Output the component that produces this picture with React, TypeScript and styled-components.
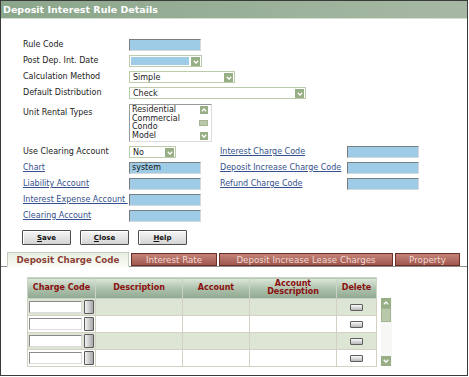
import React from 'react';
import styled, { createGlobalStyle } from 'styled-components';

const GlobalStyle = createGlobalStyle`
  html, body { margin: 0; padding: 0; background: #fff; }
  body { font-family: "DejaVu Sans", Verdana, sans-serif; font-size: 8px; color: #222; }
  * { box-sizing: border-box; }
`;

const Frame = styled.div`
  width: 468px;
  height: 376px;
  border: 1px solid #3a3a3a;
  background: #fff;
  overflow: hidden;
`;

const TitleBar = styled.div`
  height: 18px;
  padding-left: 2px;
  display: flex;
  align-items: center;
  background: linear-gradient(to right, #8aa68b, #a7b9a4);
  border-bottom: 1px solid #d6dfd0;
  color: #fff;
  font-size: 9.5px;
  font-weight: bold;
`;

const Form = styled.div`
  padding: 20px 0 0 22px;
  display: grid;
  grid-template-columns: 106px 91px 127px 72px;
  row-gap: 4px;
  align-items: center;
`;

const Label = styled.div<{ $top?: boolean }>`
  white-space: nowrap;
  line-height: 12px;
  align-self: ${(p) => (p.$top ? 'start' : 'center')};
  margin-top: ${(p) => (p.$top ? '4px' : '0')};
`;

const LinkLabel = styled.a`
  color: #34508c;
  text-decoration: underline;
  white-space: nowrap;
  line-height: 12px;
  cursor: pointer;
`;

const Field = styled.div<{ $span?: number }>`
  grid-column: span ${(p) => p.$span ?? 1};
  display: flex;
`;

const TextBox = styled.div<{ $width?: number }>`
  width: ${(p) => p.$width ?? 72}px;
  height: 12px;
  background: #9ecbe6;
  border-top: 1px solid #7d7d7d;
  border-left: 1px solid #7d7d7d;
  border-bottom: 1px solid #d9d9d9;
  border-right: 1px solid #d9d9d9;
  padding-left: 2px;
  line-height: 10px;
  color: #111;
`;

const SelectBox = styled.div<{ $width: number }>`
  width: ${(p) => p.$width}px;
  height: 12px;
  display: flex;
  align-items: stretch;
  background: #fff;
  border: 1px solid #bccbac;
  padding: 1px;
`;

const SelectValue = styled.div<{ $blue?: boolean }>`
  flex: 1;
  background: ${(p) => (p.$blue ? '#9ecbe6' : '#fff')};
  padding-left: 2px;
  line-height: 9px;
  margin-right: 2px;
`;

const ArrowBtn = styled.div<{ $size?: number }>`
  width: ${(p) => p.$size ?? 9}px;
  height: ${(p) => p.$size ?? 9}px;
  background: #98ae84;
  display: flex;
  align-items: center;
  justify-content: center;
  flex-shrink: 0;
`;

const Chevron: React.FC<{ up?: boolean }> = ({ up }) => (
  <svg width="6" height="4" viewBox="0 0 6 4">
    <path d={up ? 'M0.8 3.4 L3 1 L5.2 3.4' : 'M0.8 0.8 L3 3.2 L5.2 0.8'} stroke="#fff" strokeWidth="1.3" fill="none" />
  </svg>
);

const ListBox = styled.div`
  width: 83px;
  height: 38px;
  margin-top: 1px;
  border: 1px solid #9a9a9a;
  border-right-color: #dcdcdc;
  border-bottom-color: #dcdcdc;
  display: flex;
  padding: 1px 1px 1px 2px;
`;

const ListItems = styled.div`
  flex: 1;
  line-height: 8.6px;
  color: #222;
`;

const ListScroll = styled.div`
  width: 9px;
  display: flex;
  flex-direction: column;
  justify-content: space-between;
  align-items: center;
  margin-right: 2px;
`;

const Thumb = styled.div<{ $h: number; $w?: number }>`
  width: ${(p) => p.$w ?? 9}px;
  height: ${(p) => p.$h}px;
  background: #b9c8a8;
  border: 1px solid #a3b592;
`;

const ButtonRow = styled.div`
  display: flex;
  gap: 9px;
  margin: 8px 0 0 21px;
`;

const Button = styled.button`
  width: 49px;
  height: 15px;
  padding: 0;
  font-family: inherit;
  font-size: 7px;
  font-weight: bold;
  color: #111;
  background: linear-gradient(#f6f6f6, #d4d4d4);
  border: 1px solid #4d4d4d;
  border-radius: 1px;
  box-shadow: inset 1px 1px 0 #fff;
  u { text-decoration: underline; }
`;

const TabStrip = styled.div`
  display: flex;
  gap: 2px;
  margin-top: 7px;
  padding-left: 6px;
  border-bottom: 1px solid #8e8e8e;
  height: 15px;
  align-items: flex-end;
`;

const Tab = styled.div<{ $width: number; $active?: boolean }>`
  width: ${(p) => p.$width}px;
  display: flex;
  align-items: center;
  justify-content: center;
  white-space: nowrap;
  font-size: 8.7px;
  font-weight: ${(p) => (p.$active ? 'bold' : 'normal')};
  color: ${(p) => (p.$active ? '#8d3f36' : '#f1d9d2')};
  background: ${(p) =>
    p.$active ? 'linear-gradient(#e6efe0, #fafcf7)' : 'linear-gradient(#c4837a, #a0574d)'};
  border: 1px solid ${(p) => (p.$active ? '#c4cdbd' : '#6a2f27')};
  border-bottom: 1px solid ${(p) => (p.$active ? '#fafcf7' : '#6a2f27')};
  margin-bottom: ${(p) => (p.$active ? '-1px' : '0')};
  height: ${(p) => (p.$active ? '15px' : '13px')};
`;

const GridArea = styled.div`
  display: flex;
  align-items: flex-end;
  gap: 4px;
  margin: 10px 0 0 26px;
`;

const Table = styled.table`
  border-collapse: collapse;
  table-layout: fixed;
  width: 349px;
  border: 1px solid #cfd6c9;
`;

const Th = styled.th<{ $width: number }>`
  width: ${(p) => p.$width}px;
  height: 21px;
  padding: 0;
  font-size: 8px;
  font-weight: bold;
  line-height: 8px;
  color: #8a1010;
  background: linear-gradient(#dde7da, #aabfa9 55%, #90a891);
  border: 1px solid #c9d4c6;
`;

const Td = styled.td<{ $alt?: boolean }>`
  height: 17px;
  padding: 0;
  background: ${(p) => (p.$alt ? '#dde6d4' : '#fff')};
  border: 1px solid #d3d1c3;
  text-align: center;
  vertical-align: middle;
`;

const CodeCell = styled.div`
  display: flex;
  align-items: center;
  gap: 2px;
  padding-left: 1px;
`;

const CodeInput = styled.div`
  width: 53px;
  height: 12px;
  background: #fff;
  border-top: 1px solid #8a8a8a;
  border-left: 1px solid #8a8a8a;
  border-bottom: 1px solid #dcdcdc;
  border-right: 1px solid #dcdcdc;
`;

const LookupBtn = styled.div`
  width: 10px;
  height: 14px;
  background: linear-gradient(to right, #f2f2f2, #a8a8a8);
  border: 1px solid #5a5a5a;
  border-radius: 1px;
`;

const DeleteBtn = styled.div`
  width: 13px;
  height: 7px;
  margin: 0 auto;
  background: linear-gradient(#fafafa, #b8b8b8);
  border: 1px solid #5e5e5e;
  border-radius: 1px;
`;

const ScrollBar = styled.div`
  width: 11px;
  height: 68px;
  display: flex;
  flex-direction: column;
  justify-content: space-between;
  background: #f7f8f5;
  margin-bottom: 1px;
`;

const ScrollTop = styled.div`
  display: flex;
  flex-direction: column;
`;

const rows = [true, false, true, false];

const App: React.FC = () => (
  <>
    <GlobalStyle />
    <Frame>
      <TitleBar>Deposit Interest Rule Details</TitleBar>
      <Form>
        <Label>Rule Code</Label>
        <Field $span={3}>
          <TextBox />
        </Field>

        <Label>Post Dep. Int. Date</Label>
        <Field $span={3}>
          <SelectBox $width={73}>
            <SelectValue $blue />
            <ArrowBtn><Chevron /></ArrowBtn>
          </SelectBox>
        </Field>

        <Label>Calculation Method</Label>
        <Field $span={3}>
          <SelectBox $width={106}>
            <SelectValue>Simple</SelectValue>
            <ArrowBtn><Chevron /></ArrowBtn>
          </SelectBox>
        </Field>

        <Label>Default Distribution</Label>
        <Field $span={3}>
          <SelectBox $width={177}>
            <SelectValue>Check</SelectValue>
            <ArrowBtn><Chevron /></ArrowBtn>
          </SelectBox>
        </Field>

        <Label $top>Unit Rental Types</Label>
        <Field $span={3}>
          <ListBox>
            <ListItems>
              <div>Residential</div>
              <div>Commercial</div>
              <div>Condo</div>
              <div>Model</div>
            </ListItems>
            <ListScroll>
              <ArrowBtn $size={8}><Chevron up /></ArrowBtn>
              <Thumb $h={6} />
              <ArrowBtn $size={8}><Chevron /></ArrowBtn>
            </ListScroll>
          </ListBox>
        </Field>

        <Label>Use Clearing Account</Label>
        <Field>
          <SelectBox $width={47}>
            <SelectValue>No</SelectValue>
            <ArrowBtn><Chevron /></ArrowBtn>
          </SelectBox>
        </Field>
        <LinkLabel>Interest Charge Code</LinkLabel>
        <Field><TextBox /></Field>

        <LinkLabel>Chart</LinkLabel>
        <Field><TextBox>system</TextBox></Field>
        <LinkLabel>Deposit Increase Charge Code</LinkLabel>
        <Field><TextBox /></Field>

        <LinkLabel>Liability Account</LinkLabel>
        <Field><TextBox /></Field>
        <LinkLabel>Refund Charge Code</LinkLabel>
        <Field><TextBox /></Field>

        <LinkLabel>Interest Expense Account&nbsp;</LinkLabel>
        <Field $span={3}><TextBox /></Field>

        <LinkLabel>Clearing Account</LinkLabel>
        <Field $span={3}><TextBox /></Field>
      </Form>

      <ButtonRow>
        <Button><u>S</u>ave</Button>
        <Button><u>C</u>lose</Button>
        <Button><u>H</u>elp</Button>
      </ButtonRow>

      <TabStrip>
        <Tab $width={122} $active>Deposit Charge Code</Tab>
        <Tab $width={86}>Interest Rate</Tab>
        <Tab $width={174}>Deposit Increase Lease Charges</Tab>
        <Tab $width={65}>Property</Tab>
      </TabStrip>

      <GridArea>
        <Table>
          <thead>
            <tr>
              <Th $width={68}>Charge Code</Th>
              <Th $width={87}>Description</Th>
              <Th $width={67}>Account</Th>
              <Th $width={87}>Account<br />Description</Th>
              <Th $width={40}>Delete</Th>
            </tr>
          </thead>
          <tbody>
            {rows.map((alt, i) => (
              <tr key={i}>
                <Td $alt={alt}>
                  <CodeCell>
                    <CodeInput />
                    <LookupBtn />
                  </CodeCell>
                </Td>
                <Td $alt={alt} />
                <Td $alt={alt} />
                <Td $alt={alt} />
                <Td $alt={alt}>
                  <DeleteBtn />
                </Td>
              </tr>
            ))}
          </tbody>
        </Table>
        <ScrollBar>
          <ScrollTop>
            <ArrowBtn $size={10}><Chevron up /></ArrowBtn>
            <Thumb $h={14} $w={10} />
          </ScrollTop>
          <ArrowBtn $size={10}><Chevron /></ArrowBtn>
        </ScrollBar>
      </GridArea>
    </Frame>
  </>
);

export default App;
